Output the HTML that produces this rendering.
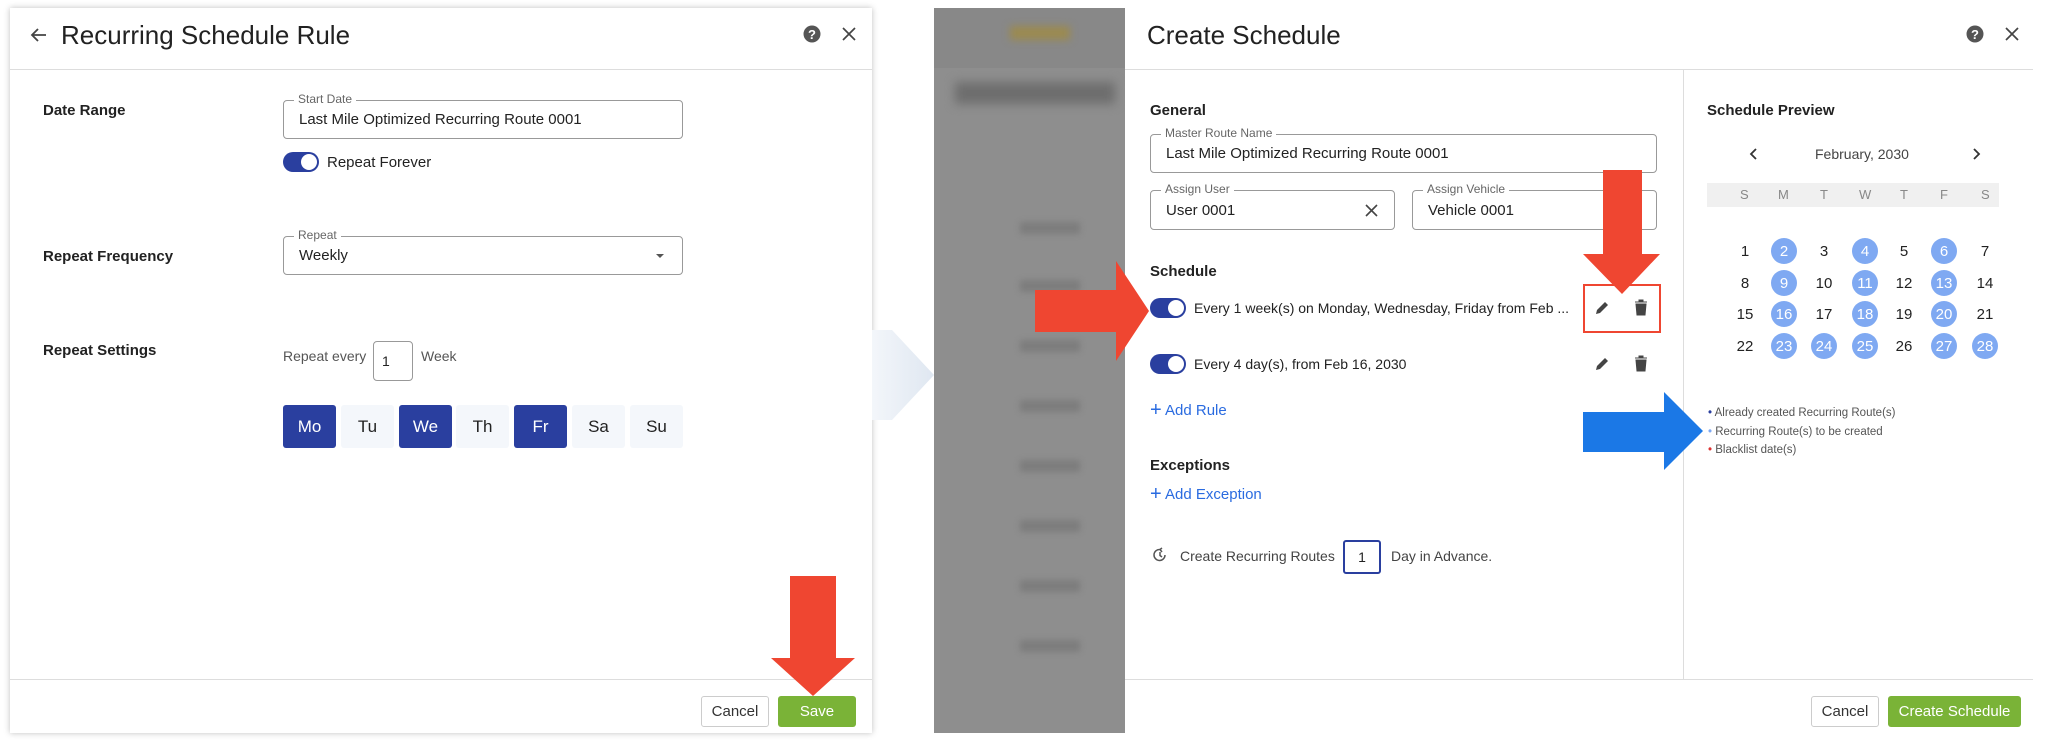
<!DOCTYPE html>
<html><head><meta charset="utf-8"><style>
*{box-sizing:border-box;margin:0;padding:0}
body{width:2046px;height:745px;background:#fff;font-family:"Liberation Sans",sans-serif;color:#222;position:relative;overflow:hidden}
.a{position:absolute}
.panel{position:absolute;background:#fff;box-shadow:0 0 6px rgba(0,0,0,.25)}
.hl{position:absolute;height:1px;background:#ddd}
.lbl{position:absolute;font-weight:bold;font-size:15px;color:#222}
.inp{position:absolute;border:1px solid #999;border-radius:4px;font-size:16px;color:#222;padding-left:15px;display:flex;align-items:center}
.inp .fl{position:absolute;top:-9px;left:10px;background:#fff;padding:0 4px;font-size:12px;color:#666}
.tog{position:absolute;width:36px;height:20px;border-radius:10px;background:#2a3f9f}
.tog:after{content:"";position:absolute;right:2px;top:2px;width:16px;height:16px;border-radius:50%;background:#fff}
.day{position:absolute;top:405px;width:53px;height:43px;display:flex;align-items:center;justify-content:center;font-size:17px;border-radius:3px}
.on{background:#2a3f9f;color:#fff}.off{background:#f4f7fb;color:#222}
.btn{position:absolute;border-radius:3px;font-size:15px;display:flex;align-items:center;justify-content:center}
.cal{position:absolute;width:26px;height:26px;border-radius:50%;font-size:15px;display:flex;align-items:center;justify-content:center;color:#222}
.cal.b{background:#7fa9f2;color:#fff}
.blue{color:#2a6be0}
.row{position:absolute;left:950px;height:12px;background:#7d7d7d;filter:blur(3px)}
</style></head><body>

<!-- left panel -->
<div class="panel" style="left:10px;top:8px;width:862px;height:725px"></div>
<svg class="a" style="left:30px;top:26px" width="18" height="18" viewBox="0 0 18 18"><path d="M16 9H3M8 3L2 9l6 6" fill="none" stroke="#444" stroke-width="1.8"/></svg>
<div class="a" style="left:61px;top:20px;font-size:26px;color:#222">Recurring Schedule Rule</div>
<svg class="a" style="left:803px;top:25px" width="18" height="18"><circle cx="9" cy="9" r="8.5" fill="#555"/><text x="9" y="14" font-size="13" font-weight="bold" fill="#fff" text-anchor="middle" font-family="Liberation Sans">?</text></svg>
<svg class="a" style="left:842px;top:27px" width="14" height="14"><path d="M1 1L13 13M13 1L1 13" stroke="#444" stroke-width="1.7"/></svg>
<div class="hl" style="left:10px;top:69px;width:862px"></div>
<div class="lbl" style="left:43px;top:102px">Date Range</div>
<div class="inp" style="left:283px;top:100px;width:400px;height:39px;font-size:15px"><span class="fl">Start Date</span>Last Mile Optimized Recurring Route 0001</div>
<div class="tog" style="left:283px;top:152px"></div>
<div class="a" style="left:327px;top:154px;font-size:15px">Repeat Forever</div>
<div class="lbl" style="left:43px;top:248px">Repeat Frequency</div>
<div class="inp" style="left:283px;top:236px;width:400px;height:39px;font-size:15px"><span class="fl">Repeat</span>Weekly<span style="position:absolute;right:18px;top:17px;border:4px solid transparent;border-top-color:#555;border-bottom:0"></span></div>
<div class="lbl" style="left:43px;top:342px">Repeat Settings</div>
<div class="a" style="left:283px;top:348px;font-size:14px;color:#555">Repeat every</div>
<div class="inp" style="left:373px;top:341px;width:40px;height:40px;padding-left:8px;font-size:14px">1</div>
<div class="a" style="left:421px;top:348px;font-size:14px;color:#555">Week</div>
<div class="day on" style="left:283px">Mo</div><div class="day off" style="left:341px">Tu</div><div class="day on" style="left:399px">We</div><div class="day off" style="left:456px">Th</div><div class="day on" style="left:514px">Fr</div><div class="day off" style="left:572px">Sa</div><div class="day off" style="left:630px">Su</div>
<div class="hl" style="left:10px;top:679px;width:862px"></div>
<div class="btn" style="left:701px;top:696px;width:68px;height:31px;border:1px solid #ccc;color:#333">Cancel</div>
<div class="btn" style="left:778px;top:696px;width:78px;height:31px;background:#7ab337;color:#fff">Save</div>
<svg class="a" style="left:770px;top:570px" width="95" height="130"><path d="M20 6H66V88H85L43 126L1 88H20Z" fill="#ef4631"/></svg>

<!-- chevron -->
<svg class="a" style="left:872px;top:300px" width="70" height="150"><defs><linearGradient id="g" x1="0" x2="1"><stop offset="0" stop-color="#f3f6fa"/><stop offset="1" stop-color="#dfe7f1"/></linearGradient></defs><path d="M0 30H20L62 75L20 120H0Z" fill="url(#g)"/></svg>

<!-- blurred bg -->
<div class="a" style="left:934px;top:8px;width:191px;height:725px;background:#8e8e8e"></div>
<div class="a" style="left:934px;top:8px;width:191px;height:60px;background:#888"></div>
<div class="a" style="left:1010px;top:26px;width:60px;height:14px;background:#9b8a50;filter:blur(4px)"></div>
<div class="a" style="left:955px;top:82px;width:160px;height:22px;background:#6e6e6e;filter:blur(5px)"></div>
<div class="row" style="top:222px;width:60px;left:1020px"></div>
<div class="row" style="top:280px;width:60px;left:1020px"></div>
<div class="row" style="top:340px;width:60px;left:1020px"></div>
<div class="row" style="top:400px;width:60px;left:1020px"></div>
<div class="row" style="top:460px;width:60px;left:1020px"></div>
<div class="row" style="top:520px;width:60px;left:1020px"></div>
<div class="row" style="top:580px;width:60px;left:1020px"></div>
<div class="row" style="top:640px;width:60px;left:1020px"></div>

<!-- right panel -->
<div class="panel" style="left:1125px;top:8px;width:908px;height:725px;box-shadow:none"></div>
<div class="a" style="left:1147px;top:20px;font-size:26px">Create Schedule</div>
<svg class="a" style="left:1966px;top:25px" width="18" height="18"><circle cx="9" cy="9" r="8.5" fill="#555"/><text x="9" y="14" font-size="13" font-weight="bold" fill="#fff" text-anchor="middle" font-family="Liberation Sans">?</text></svg>
<svg class="a" style="left:2005px;top:27px" width="14" height="14"><path d="M1 1L13 13M13 1L1 13" stroke="#444" stroke-width="1.7"/></svg>
<div class="hl" style="left:1125px;top:69px;width:908px"></div>
<div class="a" style="left:1683px;top:69px;width:1px;height:610px;background:#ddd"></div>
<div class="lbl" style="left:1150px;top:102px">General</div>
<div class="inp" style="left:1150px;top:134px;width:507px;height:39px;font-size:15px"><span class="fl">Master Route Name</span>Last Mile Optimized Recurring Route 0001</div>
<div class="inp" style="left:1150px;top:190px;width:245px;height:40px;font-size:15px"><span class="fl">Assign User</span>User 0001<svg style="position:absolute;right:16px;top:13px" width="13" height="13"><path d="M1 1L12 12M12 1L1 12" stroke="#444" stroke-width="1.6"/></svg></div>
<div class="inp" style="left:1412px;top:190px;width:245px;height:40px;font-size:15px"><span class="fl">Assign Vehicle</span>Vehicle 0001</div>
<div class="lbl" style="left:1150px;top:263px">Schedule</div>
<div class="tog" style="left:1150px;top:298px"></div>
<div class="a" style="left:1194px;top:300px;font-size:14px">Every 1 week(s) on Monday, Wednesday, Friday from Feb ...</div>
<div class="a" style="left:1583px;top:284px;width:78px;height:49px;border:2px solid #ef4631"></div>
<div class="tog" style="left:1150px;top:354px"></div>
<div class="a" style="left:1194px;top:356px;font-size:14px">Every 4 day(s), from Feb 16, 2030</div>
<svg class="a" style="left:1594px;top:300px" width="16" height="16"><path d="M2 14L3 10L11 2L14 5L6 13Z" fill="#444"/></svg>
<svg class="a" style="left:1634px;top:299px" width="14" height="17"><path d="M1 3H13M5 3V1H9V3M2 5H12L11 16H3Z" fill="#444" stroke="#444"/></svg>
<svg class="a" style="left:1594px;top:356px" width="16" height="16"><path d="M2 14L3 10L11 2L14 5L6 13Z" fill="#444"/></svg>
<svg class="a" style="left:1634px;top:355px" width="14" height="17"><path d="M1 3H13M5 3V1H9V3M2 5H12L11 16H3Z" fill="#444" stroke="#444"/></svg>
<div class="a blue" style="left:1150px;top:398px;font-size:15px"><span style="font-size:20px;position:relative;top:1px">+</span> Add Rule</div>
<div class="lbl" style="left:1150px;top:457px">Exceptions</div>
<div class="a blue" style="left:1150px;top:482px;font-size:15px"><span style="font-size:20px;position:relative;top:1px">+</span> Add Exception</div>
<svg class="a" style="left:1152px;top:547px" width="16" height="16"><path d="M13 8A5.5 5.5 0 1 1 8 2.5M8 2.5L10 1M8 2.5L10 5M8 5V8.5L10 10" fill="none" stroke="#555" stroke-width="1.5"/></svg>
<div class="a" style="left:1180px;top:548px;font-size:14px;color:#444">Create Recurring Routes</div>
<div class="a" style="left:1343px;top:540px;width:38px;height:34px;border:2px solid #2a3f9f;border-radius:3px;font-size:14px;display:flex;align-items:center;justify-content:center">1</div>
<div class="a" style="left:1391px;top:548px;font-size:14px;color:#444">Day in Advance.</div>

<div class="lbl" style="left:1707px;top:102px">Schedule Preview</div>
<svg class="a" style="left:1749px;top:147px" width="10" height="14"><path d="M7 2L2 7L7 12" fill="none" stroke="#333" stroke-width="1.8"/></svg>
<div class="a" style="left:1815px;top:146px;font-size:14px;color:#444">February, 2030</div>
<svg class="a" style="left:1971px;top:147px" width="10" height="14"><path d="M3 2L8 7L3 12" fill="none" stroke="#333" stroke-width="1.8"/></svg>
<div class="a" style="left:1707px;top:183px;width:292px;height:24px;background:#f0f0f0"></div>
<div class="a" style="left:1707px;top:187px;width:292px;font-size:13px;color:#888;display:flex">
<span style="position:absolute;left:33px">S</span><span style="position:absolute;left:71px">M</span><span style="position:absolute;left:113px">T</span><span style="position:absolute;left:152px">W</span><span style="position:absolute;left:193px">T</span><span style="position:absolute;left:233px">F</span><span style="position:absolute;left:274px">S</span></div>
<div class="a" style="left:1708px;top:404px;font-size:11.5px;color:#555;line-height:18.5px">
<div><span style="color:#2a3f9f">•</span> Already created Recurring Route(s)</div>
<div><span style="color:#7fa9f2">•</span> Recurring Route(s) to be created</div>
<div><span style="color:#d33">•</span> Blacklist date(s)</div></div>

<div class="hl" style="left:1125px;top:679px;width:908px"></div>
<div class="btn" style="left:1811px;top:696px;width:68px;height:31px;border:1px solid #ccc;color:#333">Cancel</div>
<div class="btn" style="left:1888px;top:696px;width:133px;height:31px;background:#7ab337;color:#fff">Create Schedule</div>

<!-- arrows -->
<svg class="a" style="left:1580px;top:168px" width="85" height="130"><path d="M23 2H62V86H80L42 126L3 86H23Z" fill="#ef4631"/></svg>
<svg class="a" style="left:1033px;top:258px" width="120" height="106"><path d="M2 32H83V3L116 53L83 103V74H2Z" fill="#ef4631"/></svg>
<svg class="a" style="left:1581px;top:390px" width="125" height="84"><path d="M2 22H83V2L122 41L83 80V62H2Z" fill="#1b78e6"/></svg>

<div class="a" style="left:0;top:0">
<div class="cal" style="left:1732px;top:238px">1</div><div class="cal b" style="left:1771px;top:238px">2</div><div class="cal" style="left:1811px;top:238px">3</div><div class="cal b" style="left:1852px;top:238px">4</div><div class="cal" style="left:1891px;top:238px">5</div><div class="cal b" style="left:1931px;top:238px">6</div><div class="cal" style="left:1972px;top:238px">7</div>
<div class="cal" style="left:1732px;top:270px">8</div><div class="cal b" style="left:1771px;top:270px">9</div><div class="cal" style="left:1811px;top:270px">10</div><div class="cal b" style="left:1852px;top:270px">11</div><div class="cal" style="left:1891px;top:270px">12</div><div class="cal b" style="left:1931px;top:270px">13</div><div class="cal" style="left:1972px;top:270px">14</div>
<div class="cal" style="left:1732px;top:301px">15</div><div class="cal b" style="left:1771px;top:301px">16</div><div class="cal" style="left:1811px;top:301px">17</div><div class="cal b" style="left:1852px;top:301px">18</div><div class="cal" style="left:1891px;top:301px">19</div><div class="cal b" style="left:1931px;top:301px">20</div><div class="cal" style="left:1972px;top:301px">21</div>
<div class="cal" style="left:1732px;top:333px">22</div><div class="cal b" style="left:1771px;top:333px">23</div><div class="cal b" style="left:1811px;top:333px">24</div><div class="cal b" style="left:1852px;top:333px">25</div><div class="cal" style="left:1891px;top:333px">26</div><div class="cal b" style="left:1931px;top:333px">27</div><div class="cal b" style="left:1972px;top:333px">28</div>
</div>
</body></html>
